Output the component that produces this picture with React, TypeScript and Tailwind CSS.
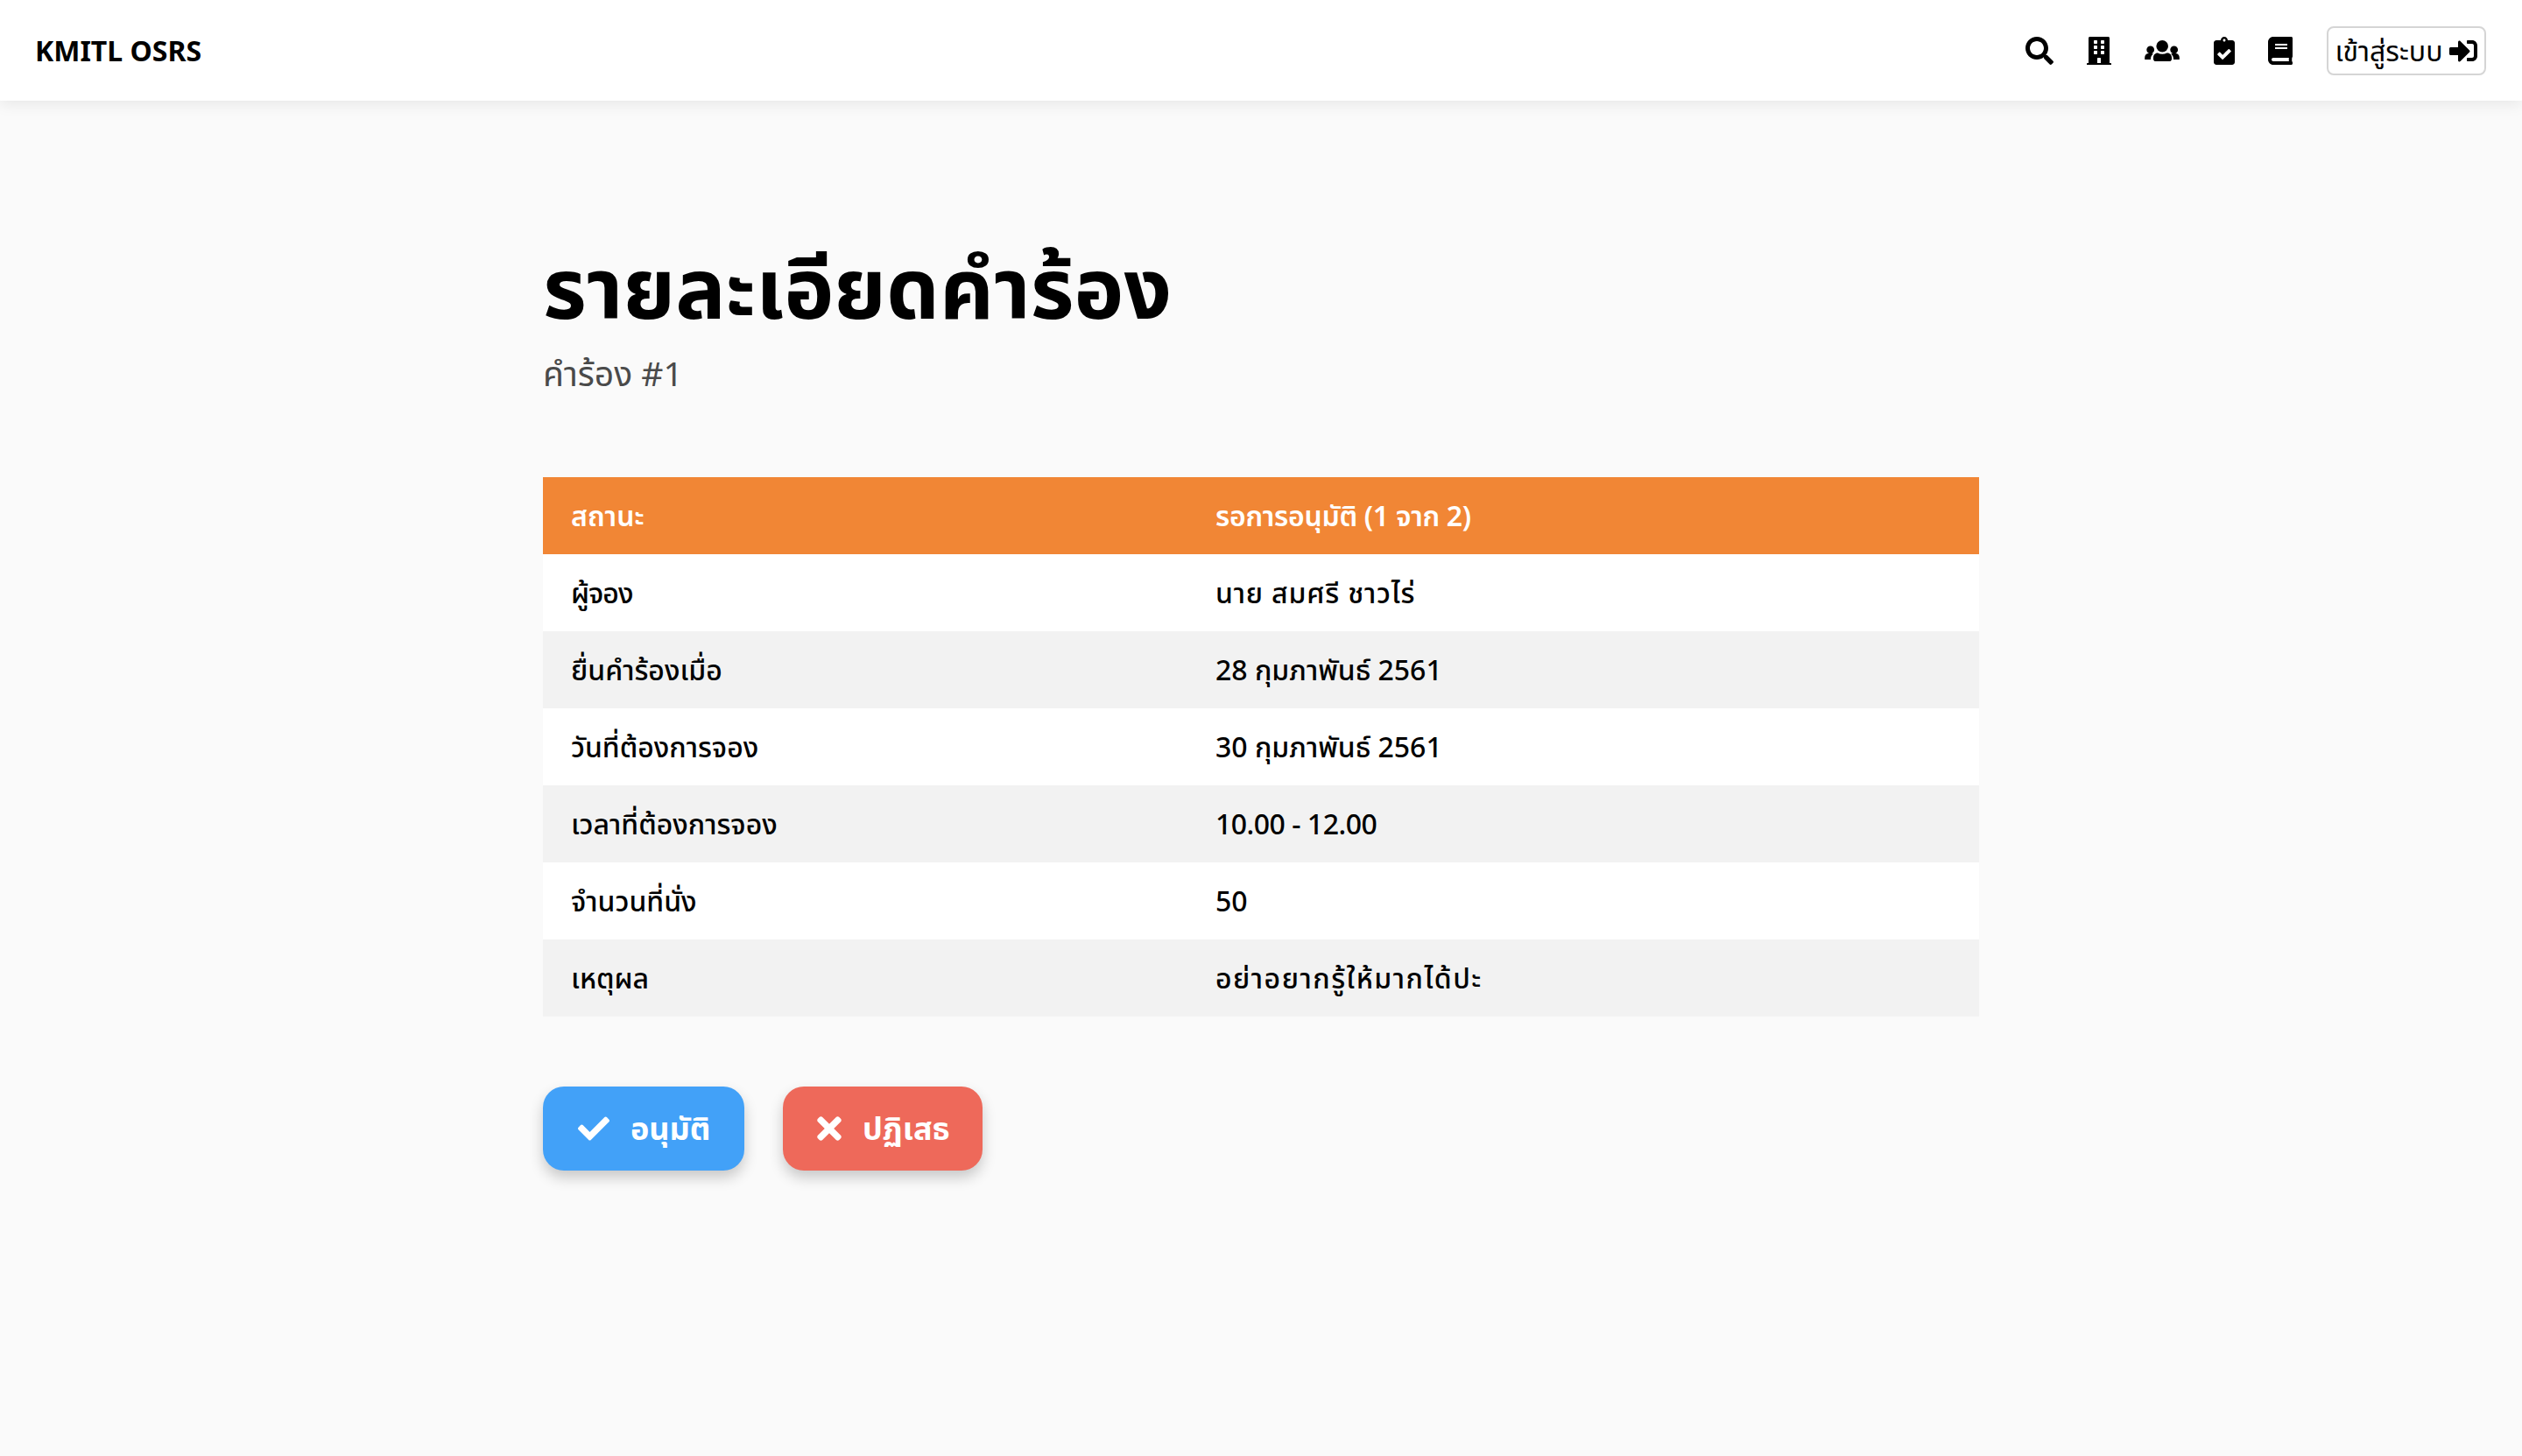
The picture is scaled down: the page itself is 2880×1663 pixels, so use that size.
import { FaSearch, FaBuilding, FaClipboardCheck, FaBook, FaSignInAlt, FaCheck, FaTimes } from "react-icons/fa";

const rows = [
  { label: "ผู้จอง", value: "นาย สมศรี ชาวไร่", labelClass: "tracking-[-1px]", valueClass: "tracking-[0.8px]" },
  { label: "ยื่นคำร้องเมื่อ", value: "28 กุมภาพันธ์ 2561", labelClass: "", valueClass: "" },
  { label: "วันที่ต้องการจอง", value: "30 กุมภาพันธ์ 2561", labelClass: "", valueClass: "" },
  { label: "เวลาที่ต้องการจอง", value: "10.00 - 12.00", labelClass: "", valueClass: "tracking-[-0.5px]" },
  { label: "จำนวนที่นั่ง", value: "50", labelClass: "", valueClass: "" },
  { label: "เหตุผล", value: "อย่าอยากรู้ให้มากได้ปะ", labelClass: "", valueClass: "tracking-[1.5px]" },
];

function UsersIcon() {
  return (
    <svg viewBox="0 0 40 32" className="w-[40px] h-[32px] ml-[38px]" fill="currentColor">
      <circle cx="20.2" cy="10.8" r="6.8" />
      <circle cx="6.7" cy="14.8" r="4.4" />
      <circle cx="33.7" cy="14.8" r="4.4" />
      <path d="M0.2 26v-2.5c0-2.6 2-4.5 4.5-4.5h3.2c0.8 0 1.4 0.2 2 0.6-1.8 1.4-2.9 3.4-3 6.4H0.2z" />
      <path d="M39.8 26v-2.5c0-2.6-2-4.5-4.5-4.5h-3.2c-0.8 0-1.4 0.2-2 0.6 1.8 1.4 2.9 3.4 3 6.4h6.7z" />
      <path d="M15 18.6c1.5 0.8 3.3 1.2 5.2 1.2s3.7-0.4 5.2-1.2h0.6c3 0 5 2.4 5 5.4v1.4c0 1.5-1.2 2.6-2.6 2.6H12.6c-1.4 0-2.6-1.1-2.6-2.6V24c0-3 2-5.4 5-5.4z" />
    </svg>
  );
}

export default function App() {
  return (
    <div className="min-h-[1663px] bg-[#fafafa] text-black font-['Noto_Sans','Noto_Sans_Thai','Open_Sans',sans-serif]">
      <nav className="h-[115px] bg-white flex items-center justify-between pl-[40px] pr-[41px] shadow-[0_4px_16px_rgba(0,0,0,0.08)]">
        <span className="text-[32px] font-bold leading-none">KMITL OSRS</span>
        <div className="flex items-center">
          <FaSearch className="w-[32px] h-[32px]" />
          <FaBuilding className="w-[28px] h-[32px] ml-[38px]" />
          <UsersIcon />
          <FaClipboardCheck className="w-[24px] h-[32px] ml-[39px]" />
          <FaBook className="w-[28px] h-[32px] ml-[38px]" />
          <button className="ml-[39px] h-[56px] w-[182px] flex items-center justify-center gap-2 rounded-[8px] border-2 border-[#d5d5d5] bg-white text-[32px] leading-none">
            เข้าสู่ระบบ <FaSignInAlt className="w-[32px] h-[32px]" />
          </button>
        </div>
      </nav>
      <main className="w-[1640px] mx-auto pt-[158px]">
        <h1 className="text-[96px] font-bold leading-[1.125]">รายละเอียดคำร้อง</h1>
        <p className="text-[39px] leading-[50px] text-[#4a4a4a] mt-[20px]">คำร้อง #1</p>
        <table className="w-full mt-[94px] text-[32px] border-collapse">
          <thead>
            <tr className="h-[88px] bg-[#f18635] text-white font-semibold">
              <td className="w-[768px] pl-[32px]">สถานะ</td>
              <td className="tracking-[-0.3px]">รอการอนุมัติ (1 จาก 2)</td>
            </tr>
          </thead>
          <tbody>
            {rows.map((r, i) => (
              <tr key={r.label} className={"h-[88px] font-medium " + (i % 2 === 0 ? "bg-white" : "bg-[#f2f2f2]")}>
                <td className={"pl-[32px] " + r.labelClass}>{r.label}</td>
                <td className={r.valueClass}>{r.value}</td>
              </tr>
            ))}
          </tbody>
        </table>
        <div className="flex gap-[44px] mt-[80px]">
          <button className="h-[96px] w-[230px] pl-[40px] rounded-[24px] bg-[#42a1f8] text-white font-bold text-[36px] flex items-center gap-[24px] shadow-[0_8px_16px_rgba(0,0,0,0.2)]">
            <FaCheck className="w-[36px] h-[36px]" /> อนุมัติ
          </button>
          <button className="h-[96px] w-[228px] pl-[39px] rounded-[24px] bg-[#ee695a] text-white font-bold text-[36px] flex items-center gap-[24px] shadow-[0_8px_16px_rgba(0,0,0,0.2)]">
            <FaTimes className="w-[28px] h-[40px]" /> ปฏิเสธ
          </button>
        </div>
      </main>
    </div>
  );
}
